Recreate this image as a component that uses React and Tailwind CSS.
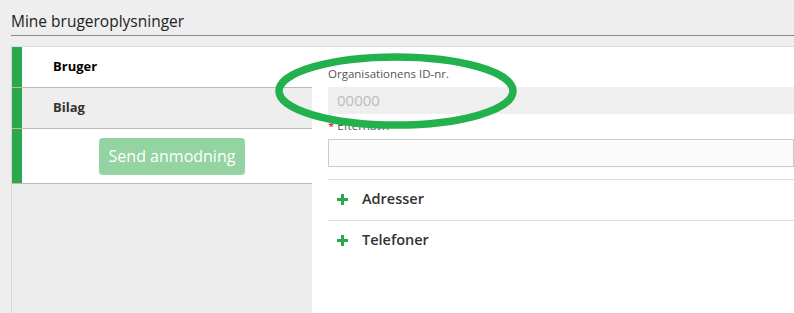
const PlusIcon = () => (
    <svg width="11" height="11" viewBox="0 0 11 11" className="shrink-0 mt-[2px]">
        <rect x="4" y="0" width="3" height="11" fill="#2aa84a" />
        <rect x="0" y="4" width="11" height="3" fill="#2aa84a" />
    </svg>
);

const Field = ({ label, required, placeholder, filled, className }) => (
    <div className={className}>
        <label className="block text-[11.5px] leading-[16px] text-[#555] mb-[5px]">
            {required && <span className="text-[#c00] mr-[3px]">*</span>}
            {label}
        </label>
        <div
            className={
                filled
                    ? "h-[27px] bg-[#efefef] px-[9px] flex items-center text-[15px] text-[#bbb]"
                    : "h-[28px] bg-[#fbfbfb] border border-[#ccc] px-[9px] flex items-center text-[15px]"
            }
        >
            {placeholder}
        </div>
    </div>
);

const Section = ({ title }) => (
    <div className="border-t border-[#ddd] h-[41px] pb-[3px] flex items-center pl-[9px] gap-[14px] text-[14.5px] font-semibold text-[#333]">
        <PlusIcon />
        <span>{title}</span>
    </div>
);

const App = () => {
    return (
        <div className="relative w-[794px] h-[313px] overflow-hidden bg-[#eeeeee] font-['Open_Sans',sans-serif] text-[#333]">
            <div className="pl-[11px] pt-[8px]">
                <h1 className="text-[15.5px] leading-[26px] pb-[1px] text-[#222] border-b border-[#888]">Mine brugeroplysninger</h1>
            </div>

            <div className="flex ml-[11px] mt-[10px] border-t border-[#ddd] h-[270px]">
                {/* left menu */}
                <div className="w-[301px] border-l border-[#d6d6d6] bg-[#ededed]">
                    <div className="flex h-[41px] bg-white border-b border-[#bbb]">
                        <div className="w-[10px] bg-[#2aa84a]" />
                        <div className="pl-[31px] flex items-center text-[13px] font-bold text-black">Bruger</div>
                    </div>
                    <div className="flex h-[41px] bg-[#eeeeee] border-b border-[#bbb]">
                        <div className="w-[10px] bg-[#2aa84a]" />
                        <div className="pl-[31px] flex items-center text-[13px] font-bold text-[#333]">Bilag</div>
                    </div>
                    <div className="flex h-[55px] bg-white border-b border-[#bbb]">
                        <div className="w-[10px] bg-[#2aa84a]" />
                        <div className="flex-1 flex items-center justify-center">
                            <button className="ml-[10px] w-[146px] h-[37px] rounded-[4px] bg-[#94d3a2] text-white text-[16px]">
                                Send anmodning
                            </button>
                        </div>
                    </div>
                </div>

                {/* right content */}
                <div className="flex-1 bg-white pl-[16px] pt-[19px]">
                    <Field label="Organisationens ID-nr." placeholder="00000" filled className="mb-[4px]" />
                    <Field label="Efternavn" required className="mb-[12px]" />
                    <Section title="Adresser" />
                    <Section title="Telefoner" />
                </div>
            </div>

            {/* green annotation ellipse */}
            <svg className="absolute left-[270px] top-[48px]" width="255" height="86" viewBox="0 0 255 86">
                <ellipse cx="126" cy="43" rx="117" ry="34" fill="none" stroke="#22b14c" strokeWidth="7.5" />
            </svg>
        </div>
    );
};

export default App;
